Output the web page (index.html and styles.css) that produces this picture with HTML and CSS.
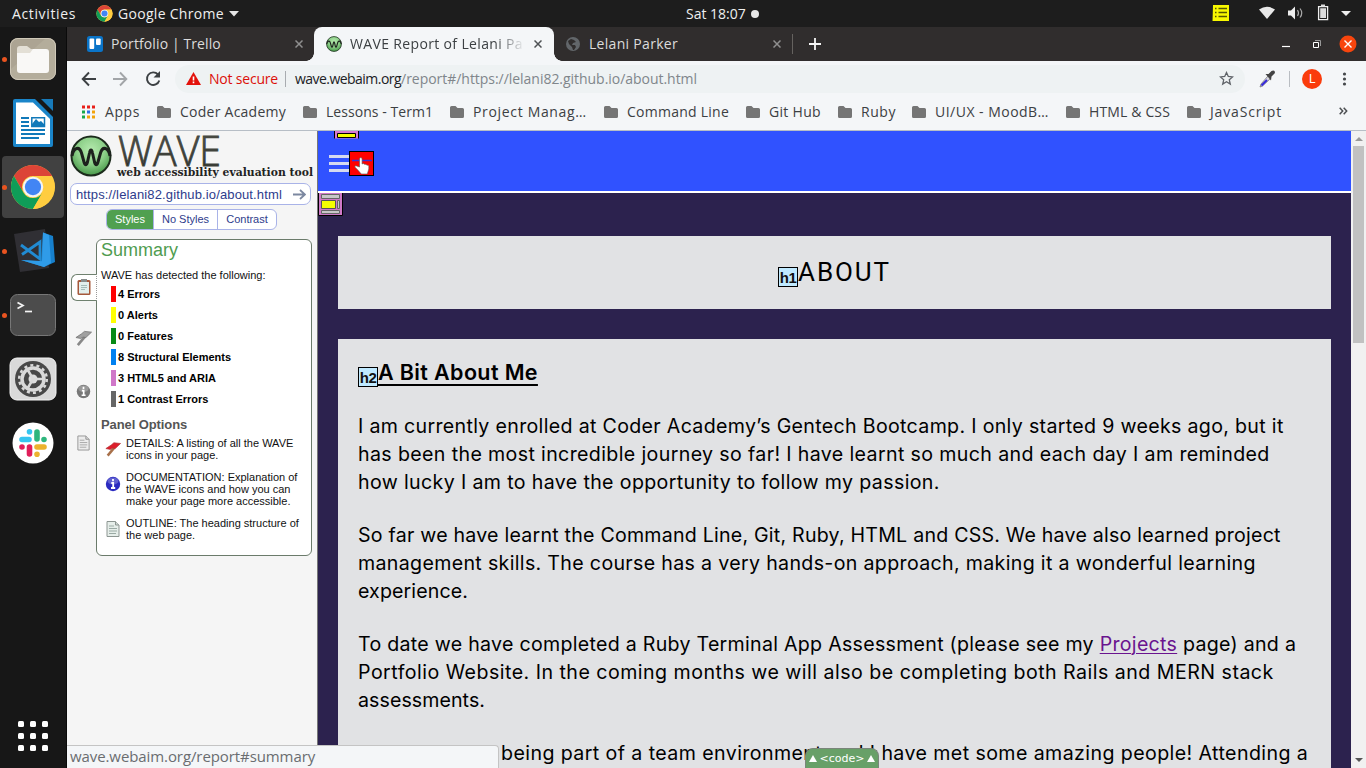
FILE: index.html
```
<!DOCTYPE html>
<html lang="en">
<head>
<meta charset="utf-8">
<title>WAVE Report of Lelani Parker</title>
<link rel="stylesheet" href="styles.css">
</head>
<body>
<svg class="defs" width="0" height="0">
  <defs>
    <radialGradient id="ball" cx=".5" cy=".35" r=".65"><stop offset="0" stop-color="#b5eaae"/><stop offset=".55" stop-color="#8ccf88"/><stop offset="1" stop-color="#479849"/></radialGradient>
    <linearGradient id="wt" x1="0" y1="0" x2="0" y2="1"><stop offset="0" stop-color="#5c5f58"/><stop offset="1" stop-color="#20221c"/></linearGradient>
    <symbol id="folder" viewBox="0 0 16 16"><path fill="#757575" d="M2.500 2h4l2 2h5A1.500 1.500 0 0 1 15 5.500V12.500A1.500 1.500 0 0 1 13.500 14h-11A1.500 1.500 0 0 1 1 12.500v-9A1.500 1.500 0 0 1 2.500 2z"/></symbol>
    <symbol id="chrome" viewBox="0 0 48 48">
      <circle cx="24" cy="24" r="23" fill="#ffcd40"/>
      <path fill="#dc4437" d="M4.100 12.500A23 23 0 0 1 43.900 12.500H24A11.500 11.500 0 0 0 14 29.700z"/>
      <path fill="#0f9d58" d="M4.100 12.500 14 29.700A11.500 11.500 0 0 0 34 29.700L24 47A23 23 0 0 1 4.100 12.500z"/>
      <path fill="#ffcd40" d="M43.900 13.500A23 23 0 0 1 24 47L34 29.700A11.500 11.500 0 0 0 24 13.500z"/>
      <circle cx="24" cy="24" r="10.700" fill="#f4f4f4"/><circle cx="24" cy="24" r="8.500" fill="#4285f4"/>
    </symbol>
    <symbol id="wave" viewBox="0 0 42 42"><circle cx="21" cy="21" r="19.500" fill="url(#ball)" stroke="#1c2b1c" stroke-width="2"/><path d="M2 21c1.500-9 7.500-10 9.500-3l2.500 9c1 3.500 2.500 3.500 3.500 0l2-9c.7-4 2.300-4 3 0l2 9c1 3.500 2.500 3.500 3.500 0l2.500-9c2-7 8-6 9.500 3" fill="none" stroke="#1d211d" stroke-width="3"/></symbol>
    <symbol id="doc" viewBox="0 0 16 18"><path d="M2 1.500h8.500L14 5v11.500H2z" fill="#e6eeea" stroke="#8d9692"/><path d="M10.500 1.500V5H14" fill="#cfd8d4" stroke="#8d9692"/><path d="M4 6h5M4 8.500h8M4 11h8M4 13.500h7" stroke="#9aaaa4"/></symbol>
    <symbol id="flag" viewBox="0 0 18 18"><path d="M3 16.500 10.500 7.500" stroke-width="2.800" stroke="var(--pole)"/><path d="M1 8.500 7 4.500l3-2.500 7.500.800L11.500 8.500 8.500 8 6 9.500z" stroke-width=".8"/></symbol>
    <symbol id="info" viewBox="0 0 16 16"><circle cx="8" cy="8" r="7.200" fill="currentColor"/><ellipse cx="8" cy="5" rx="5.500" ry="3.500" fill="#fff" opacity=".25"/><path d="M8 3v2.200M6.300 7h1.900v4.500M6 12h4.200" stroke="#fff" stroke-width="1.800" fill="none"/></symbol>
  </defs>
</svg>

<header class="topbar">
  <span class="act">Activities</span>
  <svg class="tb-chrome" width="17" height="17"><use href="#chrome"/></svg>
  <span class="app">Google Chrome</span>
  <svg class="caret" width="10" height="6"><path d="M0 0h10L5 5.500z" fill="#e6e6e6"/></svg>
  <span class="clock">Sat 18:07</span><i class="dot"></i>
  <svg class="tray" width="160" height="27" viewBox="0 0 160 27">
    <path d="M7 5h16v16H6.500z" fill="#f8f800"/><path d="M12.500 8.500H21M12.500 12.500H21M12.500 16.500H21M9 8.500h1.500M9 12.500h1.500M9 16.500h1.500" stroke="#555500" stroke-width="1.300"/>
    <path d="M53 9.500Q61 4 69 9.500L61 19z" fill="#e8e8e8"/>
    <path d="M82 10.500h3l4-4v13l-4-4h-3z" fill="#eee"/><path d="M91.500 10q2 3 0 6M94 8.500q3.500 4.500 0 9" fill="none" stroke="#aaa" stroke-width="1.200"/>
    <path d="M112.600 6.600h9v13h-9z" fill="none" stroke="#eee" stroke-width="1.300"/><path d="M115 4.500h4v2h-4zM114.200 8.200h5.800v9.800h-5.800z" fill="#ddd"/>
    <path d="M135 11h10l-5 5z" fill="#eee"/>
  </svg>
</header>

<div class="desk">
<nav class="dock">
  <div class="slot run"><svg width="48" height="48" viewBox="0 0 48 48"><rect x="1" y="3" width="46" height="42" rx="8" fill="#b4ad9b"/><path d="M2 34 36 4H8Q1 4 1 12z" fill="#a69f8e" opacity=".6"/><rect x="1.500" y="3.500" width="45" height="41" rx="7.500" fill="none" stroke="#cfc8b8"/><path d="M8 14q0-3 3-3h7l4 3h2v10H8z" fill="#e3dfd5"/><path d="M8 18h13l3-4h13q3 0 3 3v18q0 3-3 3H11q-3 0-3-3z" fill="#f9f8f6"/></svg></div>
  <div class="slot"><svg width="48" height="48" viewBox="0 0 48 48"><path d="M6 0h20l18 18v28q0 2-2 2H6q-2 0-2-2V2q0-2 2-2z" fill="#1a85c9"/><path d="M7 3.500h17L41 20v25H7z" fill="#fff"/><path d="M32 0h12v12z" fill="#177ab9"/><path d="M12 19h8M12 23h8M12 27h8M12 31h24M12 35h24M12 39h18" stroke="#1179b9" stroke-width="2"/><path d="M22.800 18.800h12.700v8.700H22.800z" fill="none" stroke="#1179b9" stroke-width="1.500"/><path d="M23 27v-2l4-5 3 3 2-1 3 3v2z" fill="#1179b9"/></svg></div>
  <div class="slot run active"><svg width="46" height="46"><use href="#chrome"/></svg></div>
  <div class="slot run"><svg width="48" height="48" viewBox="0 0 48 48"><path d="M5 7 36 2l4 39L11 45z" fill="#302f34"/><path d="M12 33l20 1.500L34 5.500l10 3.500 2 26-11 5z" fill="#1780cc"/><path d="M34 5.500 40 8l2 28-7 4-23-7 21 1z" fill="#2f9be8"/><path d="m12 18 19 14V15L13 27.500" fill="none" stroke="#218bd3" stroke-width="2.800"/></svg></div>
  <div class="slot run"><svg width="48" height="48" viewBox="0 0 48 48"><rect x="1.500" y="3.500" width="45" height="41" rx="7" fill="#4c4c4c" stroke="#777"/><path d="m8.500 11.500 5.500 3-5.500 3" fill="none" stroke="#f4f4f4" stroke-width="1.700"/><path d="M16 20.500h7" stroke="#f4f4f4" stroke-width="1.700"/></svg></div>
  <div class="slot"><svg width="48" height="48" viewBox="0 0 48 48"><rect x="1" y="3" width="46" height="42" rx="7" fill="#d9d9d9" stroke="#f3f3f3"/><circle cx="24" cy="24" r="18" fill="#484848"/><circle cx="24" cy="24" r="13.800" fill="none" stroke="#d9d9d9" stroke-width="2.500" stroke-dasharray="3 3.190"/><circle cx="24" cy="24" r="11" fill="none" stroke="#d9d9d9" stroke-width="3.500"/><circle cx="24" cy="24" r="4.500" fill="#ddd"/><path d="M24 24h11M24 24l-5.500-9.500M24 24l-5.500 9.500" stroke="#d9d9d9" stroke-width="2.500"/></svg></div>
  <div class="slot"><svg width="42" height="42" viewBox="0 0 42 42"><circle cx="21" cy="21" r="20.500" fill="#fff"/><g stroke-width="5.600" stroke-linecap="round" fill="none"><path d="M10 17.500h7M17.500 9.800v0" stroke="#36c5f0"/><path d="M25 10v7M32 17.500v0" stroke="#2eb67d"/><path d="M32 25h-7M25 32.200v0" stroke="#ecb22e"/><path d="M17.500 32v-7M10 25v0" stroke="#e01e5a"/></g></svg></div>
  <svg class="apps9" width="30" height="30" viewBox="0 0 30 30"><g fill="#fff"><rect width="6" height="6" rx="1.500"/><rect x="12" width="6" height="6" rx="1.500"/><rect x="24" width="6" height="6" rx="1.500"/><rect y="12" width="6" height="6" rx="1.500"/><rect x="12" y="12" width="6" height="6" rx="1.500"/><rect x="24" y="12" width="6" height="6" rx="1.500"/><rect y="24" width="6" height="6" rx="1.500"/><rect x="12" y="24" width="6" height="6" rx="1.500"/><rect x="24" y="24" width="6" height="6" rx="1.500"/></g></svg>
</nav>

<main class="browser">
  <div class="tabs">
    <div class="tab t1"><svg width="16" height="16"><rect width="16" height="16" rx="2.500" fill="#0a74c8"/><rect x="2.500" y="2.500" width="4.700" height="10.500" rx="1" fill="#fff"/><rect x="9" y="2.500" width="4.700" height="6.500" rx="1" fill="#fff"/></svg><span>Portfolio | Trello</span><svg class="x" width="8" height="8"><path d="m.5.500 7 7m0-7-7 7" /></svg></div>
    <div class="tab t2"><svg width="16" height="16"><use href="#wave"/></svg><span>WAVE Report of Lelani Pa</span><svg class="x" width="8" height="8"><path d="m.5.500 7 7m0-7-7 7" /></svg></div>
    <div class="tab t3"><svg width="14" height="14"><circle cx="7" cy="7" r="7" fill="#62666a"/><path d="M2 4l3-2 3 1 2 2-3 1-1 2 3 0 1 2-2 3-1 0-1-3-3-3z" fill="#302d2d"/></svg><span>Lelani Parker</span><svg class="x" width="8" height="8"><path d="m.5.500 7 7m0-7-7 7" /></svg></div>
    <svg class="plus" width="12" height="12"><path d="M6 0v12M0 6h12" stroke="#f5f5f5" stroke-width="1.800"/></svg>
    <svg class="win" width="86" height="34" viewBox="0 0 86 34"><path d="M2 19.500h8" stroke="#fff" stroke-width="1.200"/><path d="M33.500 15.500h5v5h-5z" fill="none" stroke="#fff" stroke-width="1"/><path d="M35 13.500h5.500V19" fill="none" stroke="#999"/><circle cx="68" cy="17" r="8.500" fill="#f8450d"/><path d="m64.500 13.500 7 7m0-7-7 7" stroke="#fff" stroke-width="1.400"/></svg>
  </div>
  <div class="toolbar">
    <svg class="nav" width="80" height="18" viewBox="0 0 80 18"><path d="M15 9H2M8 2.500 1.700 9 8 15.500" fill="none" stroke="#3c4043" stroke-width="1.900"/><path d="M32 9h13m-6-6.500L45.300 9 39 15.500" fill="none" stroke="#a2a5a8" stroke-width="1.900"/><path d="M77 4.500A6.300 6.300 0 1 0 78.300 10.500" fill="none" stroke="#3c4043" stroke-width="1.900"/><path d="M79 1v6.500h-6.500z" fill="#3c4043"/></svg>
    <div class="omni"><svg width="15" height="13"><path d="M7.500 0 15 13H0z" fill="#e3120b"/><path d="M7.500 4.500v4M7.500 9.500v1.800" stroke="#fff" stroke-width="1.600"/></svg><span class="ns">Not secure</span><i></i><span class="host">wave.webaim.org</span><span class="path">/report#/https://lelani82.github.io/about.html</span>
      <svg class="star" width="15" height="15" viewBox="0 0 15 15"><path d="m7.500 1.500 1.800 4 4.300.400-3.300 2.900 1 4.300-3.800-2.300-3.800 2.300 1-4.300L1.400 5.900l4.300-.400z" fill="none" stroke="#5f6368" stroke-width="1.300"/></svg></div>
    <svg class="ext" width="95" height="24" viewBox="0 0 95 24"><path d="M4 20 5 17 12 9l2.500 2.500-8 7.500z" fill="#d6d6e0" stroke="#777" stroke-width=".8"/><path d="M5.500 18.500 11 13" stroke="#3427d9" stroke-width="2"/><path d="m9.500 7 3 0 3-3q3.500-1.500 3.500 2l-3.500 3.500-.5 4z" fill="#444"/><path d="M33.500 4v16" stroke="#b9bdc2"/><circle cx="56" cy="12" r="10" fill="#fa3c0c"/><text x="53" y="16" class="ava">L</text><g fill="#45484b"><circle cx="88.500" cy="7" r="1.600"/><circle cx="88.500" cy="12" r="1.600"/><circle cx="88.500" cy="17" r="1.600"/></g></svg>
  </div>
  <div class="marks">
    <a class="b0"><svg width="16" height="16" viewBox="0 0 16 16"><path d="M1 3h3M6 3h3M11 3h3" stroke="#e8201a" stroke-width="3"/><path d="M1 8h3M1 13h3" stroke="#17a84b" stroke-width="3"/><path d="M6 8h3" stroke="#2c6fe8" stroke-width="3"/><path d="M11 8h3M6 13h3m2 0h3" stroke="#f2a30a" stroke-width="3"/></svg>Apps</a>
    <a class="b1"><svg width="16" height="16"><use href="#folder"/></svg>Coder Academy</a>
    <a class="b2"><svg width="16" height="16"><use href="#folder"/></svg>Lessons - Term1</a>
    <a class="b3"><svg width="16" height="16"><use href="#folder"/></svg>Project Manag…</a>
    <a class="b4"><svg width="16" height="16"><use href="#folder"/></svg>Command Line</a>
    <a class="b5"><svg width="16" height="16"><use href="#folder"/></svg>Git Hub</a>
    <a class="b6"><svg width="16" height="16"><use href="#folder"/></svg>Ruby</a>
    <a class="b7"><svg width="16" height="16"><use href="#folder"/></svg>UI/UX - MoodB…</a>
    <a class="b8"><svg width="16" height="16"><use href="#folder"/></svg>HTML &amp; CSS</a>
    <a class="b9"><svg width="16" height="16"><use href="#folder"/></svg>JavaScript</a>
    <svg class="more" width="9" height="8"><path d="m.7.700 3 3.300-3 3.300M4.700.700l3 3.300-3 3.300" fill="none" stroke="#4c4f52" stroke-width="1.500"/></svg>
  </div>

  <div class="content">
    <aside class="wave">
      <svg class="logo" width="249" height="52" viewBox="0 0 249 52"><use href="#wave" x="3" y="4" width="42" height="42"/>
        <text x="51" y="35" class="wv" textLength="103" lengthAdjust="spacingAndGlyphs" fill="url(#wt)" stroke="#43463f" stroke-width=".9">WAVE</text>
        <text x="50" y="45" class="wl" textLength="196" lengthAdjust="spacingAndGlyphs">web accessibility evaluation tool</text></svg>
      <div class="url"><span>https://lelani82.github.io/about.html</span><svg width="13" height="11"><path d="M0 5.500h11.500M7 1l5 4.500L7 10" fill="none" stroke="#7c88a0" stroke-width="1.800"/></svg></div>
      <div class="modes"><b>Styles</b><span>No Styles</span><span>Contrast</span></div>
      <div class="cols">
        <div class="side">
          <div class="cur"><svg width="16" height="18" viewBox="0 0 16 18"><rect x="1.500" y="2" width="13" height="15" rx="1.500" fill="#a5583b"/><path d="M3 4h10v11.500H3z" fill="#e2efed"/><path d="M5 1h6v3H5z" fill="#888d8c"/><path d="M5 7.500h6M5 9.500h6M5 11.500h4" stroke="#a4bcb9"/></svg></div>
          <svg class="fg" width="17" height="18"><use href="#flag"/></svg>
          <svg class="ig" width="15" height="15"><use href="#info"/></svg>
          <svg class="dg" width="15" height="18"><use href="#doc"/></svg>
        </div>
        <section class="panel">
          <h2>Summary</h2>
          <p class="det">WAVE has detected the following:</p>
          <ul><li class="c1">4 Errors</li><li class="c2">0 Alerts</li><li class="c3">0 Features</li><li class="c4">8 Structural Elements</li><li class="c5">3 HTML5 and ARIA</li><li class="c6">1 Contrast Errors</li></ul>
          <h3>Panel Options</h3>
          <div class="opt"><svg class="fr" width="17" height="18"><use href="#flag"/></svg><p>DETAILS: A listing of all the WAVE<br>icons in your page.</p></div>
          <div class="opt"><svg class="ib" width="16" height="16"><use href="#info"/></svg><p>DOCUMENTATION: Explanation of<br>the WAVE icons and how you can<br>make your page more accessible.</p></div>
          <div class="opt"><svg width="16" height="18"><use href="#doc"/></svg><p>OUTLINE: The heading structure of<br>the web page.</p></div>
        </section>
      </div>
    </aside>
    <section class="page">
      <div class="blue">
        <svg width="60" height="60" viewBox="0 0 60 60"><path d="M16.500-1h24v8.500h-24z" fill="#d77ad0"/><path d="M16.500 0v7.500M40.500 0v7.500" stroke="#000"/><path d="M19.500 2.500h18v4h-18z" fill="#f6ff00" stroke="#000"/><path d="M11 25.500h20M11 32.500h20M11 39.500h20" stroke="#d5daf0" stroke-width="3"/><rect x="31.500" y="20.500" width="24" height="24" fill="#f00" stroke="#000"/><path d="M34 29.500h20" stroke="#3433d8" stroke-width="1.500"/><path d="M41.500 36v-8q0-1.500 1.300-1.500t1.300 1.500v5l1-.5q1 0 1.200.8 2-.5 2.300.8 2-.3 2.200 1.200V38l-1.500 5h-6l-3.500-4-3-3q0-2 2-1z" fill="#fff" stroke="#555" stroke-width=".6"/></svg>
      </div>
      <div class="dark">
        <svg class="hdr" width="25" height="23" viewBox="0 0 25 23"><path d="M.5-.5h24v23H.5z" fill="#cf79c8" stroke="#000"/><path d="M3.500 1.500h18v4h-18zM19.500 7.500h2v8h-2zM3.500 17.500h18v3h-18z" fill="#c8c8c8" stroke="#666"/><path d="M3.500 7.500h14v8h-14z" fill="#f6ff00" stroke="#555"/></svg>
        <div class="card about"><em class="tag">h1</em><h1>ABOUT</h1></div>
        <div class="card text">
          <h2><em class="tag">h2</em><u>A Bit About Me</u></h2>
          <p><span class="l1">I am currently enrolled at Coder Academy’s Gentech Bootcamp. I only started 9 weeks ago, but it</span><span class="l2">has been the most incredible journey so far! I have learnt so much and each day I am reminded</span><span class="l3">how lucky I am to have the opportunity to follow my passion.</span></p>
          <p><span class="l4">So far we have learnt the Command Line, Git, Ruby, HTML and CSS. We have also learned project</span><span class="l5">management skills. The course has a very hands-on approach, making it a wonderful learning</span><span class="l6">experience.</span></p>
          <p><span class="l7">To date we have completed a Ruby Terminal App Assessment (please see my <a>Projects</a> page) and a</span><span class="l8">Portfolio Website. In the coming months we will also be completing both Rails and MERN stack</span><span class="l9">assessments.</span></p>
          <p><span class="l10"><span class="lead">The reward of</span>being part of a team environment and I have met some amazing people! Attending a</span></p>
        </div>
      </div>
    </section>
    <div class="scroll"><svg width="8" height="4"><path d="M4 0 8 4H0z" fill="#999"/></svg><i></i><svg class="dn" width="8" height="4"><path d="M0 0h8L4 4z" fill="#555"/></svg></div>
    <div class="status">wave.webaim.org/report#summary</div>
    <div class="code"><i></i>&lt;code&gt;<i></i></div>
  </div>
</main>
</div>
</body>
</html>
```
FILE: styles.css
```
*{box-sizing:border-box}
body{margin:0;width:1366px;height:768px;overflow:hidden;background:#171717;font:14px "Open Sans","Noto Sans",sans-serif;color:#3c4043}
h1,h2,h3,p,ul{margin:0;padding:0}
svg{display:block;flex:none}
.defs{position:absolute}
.topbar{height:27px;background:#1d1d1d;color:#efefef;display:flex;align-items:center;white-space:nowrap;font-weight:500}
.act{margin-left:12px;width:83px;letter-spacing:.63px}
.app{margin-left:6px;width:106px;letter-spacing:.3px}
.tb-chrome{margin-left:1px;margin-right:-1px}
.caret{margin-left:5px}
.clock{margin-left:447px;width:60px}
.dot{width:8px;height:8px;border-radius:50%;background:#e8e8e8;margin-left:5px}
.tray{margin-left:447px}
.desk{display:flex;height:741px}
.dock{width:67px;background:#171717;display:flex;flex-direction:column;align-items:flex-end;padding-right:2px;border-right:1px solid #0a0a0a}
.slot{width:62px;height:62px;margin-bottom:2px;border-radius:4px;display:flex;align-items:center;justify-content:center;position:relative}
.dock .slot:first-child{margin-top:1px}
.slot.active{background:#414141}
.run::before{content:"";position:absolute;left:0;top:29px;width:5px;height:5px;border-radius:50%;background:#e95420}
.apps9{margin:auto 16px 17px auto}
.browser{width:1299px;display:flex;flex-direction:column;background:#f4f6f8}
.tabs{height:34px;background:#302d2d;display:flex;align-items:center;color:#dcdcdc}
.tab{display:flex;align-items:center;height:34px;white-space:nowrap}
.tab span{margin-left:8px;line-height:20px;margin-bottom:1px}
.x{fill:none;stroke:#8f8f8f;stroke-width:1.500}
.t1{width:247px;padding-left:20px}
.t1 span{width:184px;letter-spacing:.11px}
.t2{width:240px;background:#f4f6f8;border-radius:8px 8px 0 0;padding-left:12px;color:#3c4043;position:relative}
.t2::before,.t2::after{content:"";position:absolute;bottom:0;width:8px;height:8px}
.t2::before{left:-8px;background:radial-gradient(circle at 0 0,#302d2d 7.500px,#f4f6f8 8px)}
.t2::after{right:-8px;background:radial-gradient(circle at 100% 0,#302d2d 7.500px,#f4f6f8 8px)}
.t2 span{width:175px;margin-right:9px;letter-spacing:.35px;-webkit-mask-image:linear-gradient(90deg,#000 145px,transparent 175px)}
.t2 .x{stroke:#4f5255}
.t3{width:239px;padding-left:12px;border-right:1px solid #65625f;height:20px}
.t3 span{margin-left:9px;width:184px;letter-spacing:.3px}
.plus{margin-left:16px}
.win{margin-left:auto}
.toolbar{height:35px;display:flex;align-items:center}
.nav{margin-left:14px}
.omni{margin-left:14px;width:1070px;height:28px;border-radius:14px;background:#eef2f3;display:flex;align-items:center;padding-left:11px;white-space:nowrap}
.ns{color:#dc0f0a;width:69px;margin-left:8px;letter-spacing:-.2px}
.omni i{width:1px;height:16px;background:#a8acb0;margin:0 9px 0 7px}
.host{color:#202124;letter-spacing:-.54px}
.path{color:#80868b;letter-spacing:-.035px}
.star{margin-left:auto;margin-right:11px}
.ext{margin-left:11px}
.ava{font:12px Roboto,sans-serif;fill:#fff}
.marks{height:35px;display:flex;align-items:center;padding:0 0 4px 14px;border-bottom:1px solid #b7bec6;white-space:nowrap}
.marks a{display:flex;gap:8px;flex:none}
.marks a svg{margin-top:2px;margin-left:-1px}
.marks .b0{width:76px;letter-spacing:.58px}.marks .b0 svg{margin-left:0}
.b1{width:146px;letter-spacing:.25px}.b2{width:147px;letter-spacing:.05px}.b3{width:154px;letter-spacing:.67px}.b4{width:142px;letter-spacing:.25px}.b5{width:92px;letter-spacing:.31px}.b6{width:74px;letter-spacing:.55px}.b7{width:154px;letter-spacing:.48px}.b8{width:121px;letter-spacing:.14px}.b9{letter-spacing:.85px}
.more{margin-left:auto;margin-right:18px}
.content{height:637px;display:flex;position:relative;overflow:hidden}
.wave{width:251px;background:#f5f5f5;border-right:1px solid #777;font:11px "Liberation Sans",Arial,sans-serif;color:#111}
.wv{font:300 43px "Open Sans",sans-serif}
.wl{font:bold 11px "DejaVu Serif",serif;fill:#222}
.url{margin-left:3px;width:241px;height:22px;border:1px solid #a9b3e8;border-radius:7px;background:#fff;display:flex;align-items:center;justify-content:space-between;padding:0 4px 0 5px;color:#2e3c8c;font-size:13px;letter-spacing:.137px}
.modes{margin:4px 0 0 39px;width:171px;height:21px;border:1px solid #a9b3e8;border-radius:6px;background:#fff;display:flex;overflow:hidden;color:#2e3c8c;line-height:19px;text-align:center}
.modes b{font-weight:400;background:#50a050;color:#fff;width:46px}
.modes span{width:64px;border-left:1px solid #a9b3e8}
.modes span+span{width:59px}
.cols{display:flex;margin-top:9px}
.side{width:29px;padding:35px 0 0 4px}
.cur{width:26px;height:27px;border:1px solid #6f816f;border-right:1px dotted #999;border-radius:6px 0 0 6px;background:#fff;padding:3px 0 0 4px;position:relative;z-index:1}
.fg{margin:28px 0 0 4px;fill:#a0a0a0;stroke:#707070;--pole:#888}
.ig{margin:37px 0 0 5px;color:#777}
.dg{margin:35px 0 0 5px;filter:grayscale(1)}
.fr{fill:#de1e2b;stroke:#b3353a;--pole:#a8704a}
.ib{color:#2b2bc0;margin-bottom:10px}
.panel{width:216px;height:317px;border:1px solid #6b7b6b;border-radius:6px;background:#fff;padding-left:4px}
.panel h2{font-size:18px;font-weight:400;line-height:20px;color:#4f9c50}
.det{line-height:13px;margin-top:9px}
.panel ul{list-style:none;margin:4px 0 0 10px;font-weight:bold;color:#000}
.panel li{height:16px;line-height:16px;margin:0 0 5px;border-left:5px solid var(--c);padding-left:2px}
.c1{--c:#f00}.c2{--c:#ff0}.c3{--c:#078a16}.c4{--c:#0080f0}.c5{--c:#d077c8}.c6{--c:#666}
.panel h3{font-size:13px;line-height:15px;color:#555;margin-top:10px;letter-spacing:-.1px}
.opt{display:flex;gap:5px;line-height:12px;margin:5px 0 10px 4px;white-space:nowrap;align-items:center}
.opt svg{width:16px}
.opt+.opt{margin-top:10px}
.page{width:1033px;background:#2c224e;color:#111}
.blue{height:62px;background:#3052ff;border-bottom:2px solid #fff}
.dark{padding:0 20px}
.hdr{margin-left:-20px}
.card{background:#e1e2e4}
.about{margin-top:20px;height:73px;display:flex;justify-content:center;align-items:center}
.about h1{font:26px/30px Roboto,sans-serif;letter-spacing:1.900px;color:#000;margin-bottom:1px}
.tag{display:inline-block;width:20px;height:20px;border:1px solid #000;background:#bfe9ff;color:#111;font:bold 15px/20px "Liberation Sans",sans-serif;text-align:center;letter-spacing:-.5px;flex:none}
.about .tag{margin-top:9px}
.text{margin-top:30px;padding:19px 20px;height:460px;font:19.600px/28px Inter,sans-serif;color:#000;white-space:nowrap}
.text h2{height:28px;font:600 21.500px/28px Inter,sans-serif;letter-spacing:.37px;color:#000;display:flex}
.text h2 .tag{margin-top:9px}
.text h2 u{text-decoration-thickness:2px;text-underline-offset:4px}
.text p{margin-top:25px}
.text h2+p{margin-top:26px}
.text p>span{display:block}
.text a{color:#6a148f;text-decoration:underline;text-decoration-thickness:1px;text-underline-offset:2px}
.l1{letter-spacing:.32px}.l2{letter-spacing:.365px}.l3{letter-spacing:.36px}.l4{letter-spacing:.224px}.l5{letter-spacing:.33px}.l6{letter-spacing:.11px}.l7{letter-spacing:.28px}.l8{letter-spacing:.479px}.l9{letter-spacing:.07px}.l10{letter-spacing:.41px}
.lead{display:inline-block;width:143px}
.scroll{width:15px;background:#f1f1f1;display:flex;flex-direction:column;align-items:center;padding:6px 0}
.scroll i{width:11px;height:197px;background:#c1c1c1;margin-top:5px}
.dn{margin-top:auto}
.status{position:absolute;left:0;bottom:0;width:432px;height:23px;background:#f4f6f8;border:1px solid #c4c4c4;border-width:1px 1px 0 0;border-radius:0 4px 0 0;padding-left:3px;font-size:15px;line-height:21px;letter-spacing:-.09px;color:#6a6d70}
.code{position:absolute;left:738px;bottom:0;width:74px;height:20px;background:#68a068;border:1px solid #7a857a;border-bottom:0;border-radius:8px 8px 0 0;color:#fff;font:11px/17px "DejaVu Sans",sans-serif;display:flex;justify-content:center;align-items:center;gap:3px;padding-bottom:1px}
.code i{border:4px solid transparent;border-top:0;border-bottom:7px solid #fff}
```
